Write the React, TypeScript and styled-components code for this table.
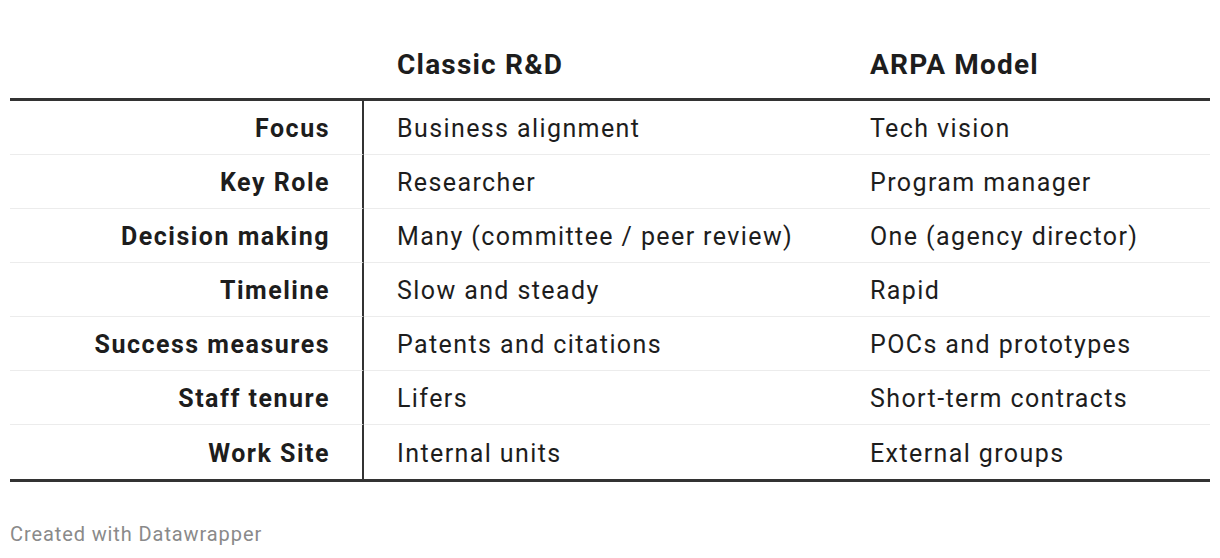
import React from "react";
import styled, { createGlobalStyle } from "styled-components";

const Global = createGlobalStyle`
  html, body { margin: 0; padding: 0; background: #fff; }
  body { font-family: Roboto, "Noto Sans", sans-serif; color: #1d1d1d; }
`;

const Page = styled.div`
  padding: 28px 10px 0;
  width: 1200px;
`;

const Grid = styled.div`
  display: grid;
  grid-template-columns: 354px 473px 373px;
  border-bottom: 3px solid #333;
`;

const HeadCell = styled.div`
  height: 73px;
  display: flex;
  align-items: center;
  padding-left: 33px;
  padding-top: 2px;
  box-sizing: border-box;
  font-size: 28px;
  font-weight: 700;
  letter-spacing: 1.2px;
  border-bottom: 3px solid #333;
`;

const LabelCell = styled.div<{ $last?: boolean }>`
  height: 54px;
  display: flex;
  align-items: center;
  justify-content: flex-end;
  padding-right: 32px;
  padding-top: 2px;
  box-sizing: border-box;
  font-size: 25px;
  font-weight: 700;
  letter-spacing: 1.5px;
  border-right: 2px solid #333;
  border-bottom: ${(p) => (p.$last ? "none" : "1px solid #ececec")};
`;

const Cell = styled.div<{ $last?: boolean }>`
  height: 54px;
  display: flex;
  align-items: center;
  padding-left: 33px;
  padding-top: 2px;
  box-sizing: border-box;
  font-size: 25px;
  font-weight: 400;
  letter-spacing: 1.4px;
  border-bottom: ${(p) => (p.$last ? "none" : "1px solid #ececec")};
`;

const Footer = styled.div`
  margin-top: 40px;
  font-size: 20px;
  letter-spacing: 0.9px;
  color: #8a8a8a;
`;

const rows: [string, string, string][] = [
  ["Focus", "Business alignment", "Tech vision"],
  ["Key Role", "Researcher", "Program manager"],
  ["Decision making", "Many (committee / peer review)", "One (agency director)"],
  ["Timeline", "Slow and steady", "Rapid"],
  ["Success measures", "Patents and citations", "POCs and prototypes"],
  ["Staff tenure", "Lifers", "Short-term contracts"],
  ["Work Site", "Internal units", "External groups"],
];

export default function App() {
  return (
    <Page>
      <Global />
      <Grid>
        <HeadCell />
        <HeadCell>Classic R&amp;D</HeadCell>
        <HeadCell>ARPA Model</HeadCell>
        {rows.map(([a, b, c], i) => {
          const last = i === rows.length - 1;
          return (
            <React.Fragment key={a}>
              <LabelCell $last={last}>{a}</LabelCell>
              <Cell $last={last}>{b}</Cell>
              <Cell $last={last}>{c}</Cell>
            </React.Fragment>
          );
        })}
      </Grid>
      <Footer>Created with Datawrapper</Footer>
    </Page>
  );
}
